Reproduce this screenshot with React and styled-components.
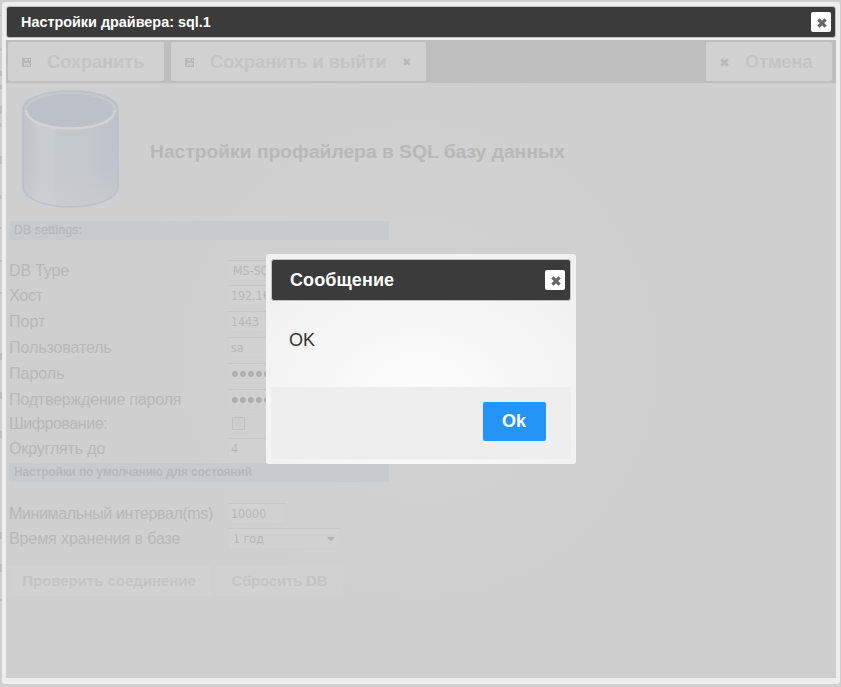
import React from 'react';
import styled, { createGlobalStyle } from 'styled-components';

const Global = createGlobalStyle`
  * { box-sizing: border-box; }
  html, body { margin: 0; padding: 0; }
  body {
    width: 841px; height: 687px; overflow: hidden; background: #d0d0d0;
    font-family: "Liberation Sans", Arial, sans-serif;
  }
  button { font-family: inherit; }
`;

const Page = styled.div`
  width: 841px;
  height: 687px;
  padding: 2px 1px 3px 0;
  display: flex;
  background: #cfcfcf;
`;

const PageEdge = styled.div`
  width: 2px;
  flex: none;
  display: flex;
  flex-direction: column;
`;

const EdgeMark = styled.i`
  height: ${p => p.$h || 2}px;
  margin-top: ${p => p.$gap}px;
  background: ${p => p.$c || '#b9b9b9'};
`;

const Window = styled.section`
  flex: 1;
  display: flex;
  flex-direction: column;
  padding: 4px 4px 6px;
  border-radius: 3px;
  background: #eeeeee;
`;

const TitleBar = styled.header`
  height: ${p => p.$h}px;
  flex: none;
  display: flex;
  align-items: center;
  justify-content: space-between;
  padding: ${p => p.$pad};
  border: 1px solid #c2c2c2;
  border-radius: 3px;
  background: #3b3b3b;
  color: #fff;
  font-weight: bold;
  font-size: ${p => p.$size}px;
  letter-spacing: ${p => p.$track || 0}px;
`;

const CloseButton = styled.button`
  width: 20px;
  height: 20px;
  padding: 1px 0 0 1px;
  display: flex;
  align-items: center;
  justify-content: center;
  border: 0;
  border-radius: 2px;
  background: #fff;
  color: #666;
`;

const Content = styled.main`
  flex: 1;
  margin-top: 2px;
  background: radial-gradient(circle 300px at 414px 320px, #d1d1d1 0%, #d0d0d0 70%, #cfcfcf 100%);
  color: #b5b5b5;
`;

const Toolbar = styled.nav`
  height: 43px;
  display: flex;
  align-items: center;
  padding: 0 4px 0 2px;
  gap: 7px;
  background: #bebebe;
`;

const ToolButton = styled.button`
  width: ${p => p.$w}px;
  height: 39px;
  display: flex;
  align-items: center;
  padding: 1px 0 0 14px;
  margin-left: ${p => (p.$end ? 'auto' : '0')};
  border: 0;
  border-radius: 2px;
  background: #d1d1d1;
  color: #c4c4c4;
  font-size: 18.2px;
  font-weight: bold;
  white-space: nowrap;

  span { margin: 0 16px 0 16px; }
  svg { color: #b9b9b9; }
`;

const Intro = styled.div`
  height: 138px;
  display: flex;
  align-items: flex-start;
  padding: 5px 0 0 14px;
`;

const Heading = styled.h1`
  margin: 52px 0 0 29px;
  font-size: 19.26px;
  line-height: 24px;
  color: #b8b8b8;
`;

const SectionTitle = styled.h2`
  width: 380px;
  height: 19px;
  margin: 0 0 0 3px;
  padding-left: 5px;
  font-size: 12px;
  line-height: 19px;
  font-weight: ${p => (p.$light ? 'normal' : 'bold')};
  letter-spacing: ${p => (p.$light ? 0.3 : -0.17)}px;
  -webkit-text-stroke: ${p => (p.$light ? '0.3px #b5b9bb' : '0')};
  color: #b5b9bb;
  background: #c8cbce;
`;

const Rows = styled.div`
  padding: ${p => p.$top}px 0 0 3px;
`;

const Row = styled.div`
  height: ${p => p.$h}px;
  display: grid;
  grid-template-columns: 218px auto;
  align-items: start;
`;

const Label = styled.label`
  font-size: 16px;
  line-height: 25px;
  letter-spacing: ${p => p.$track || 0}px;
  color: #b8b8b8;
  white-space: nowrap;
`;

const Field = styled.div`
  width: ${p => p.$w || 150}px;
  height: 21px;
  margin: 2px 0 0 1px;
  display: flex;
  align-items: center;
  justify-content: space-between;
  padding: 0 4px 0 ${p => (p.$select ? 4 : 2)}px;
  border: 1px solid #cecece;
  border-top-color: #c7c7c7;
  background: #d1d1d1;
  color: #b7b7b7;
  font-family: "DejaVu Sans Condensed", "DejaVu Sans", sans-serif;
  font-size: 12.3px;
  white-space: nowrap;
`;

const Dots = styled.span`
  display: flex;
  gap: 2px;
  padding-left: 1px;

  i { width: 6px; height: 6px; border-radius: 50%; background: #b0b0b0; }
`;

const Check = styled.span`
  width: 13px;
  height: 13px;
  margin: 6px 0 0 5px;
  border: 1px solid #c0c0c0;
  background: #cdcdcd;
`;

const Actions = styled.div`
  display: flex;
  gap: 5px;
  padding: 15px 0 0 3px;
`;

const ActionButton = styled.button`
  width: ${p => p.$w}px;
  height: 30px;
  padding: 0 ${p => p.$shift || 0}px 2px 0;
  border: 0;
  border-radius: 2px;
  background: #d1d1d1;
  color: #c4c4c4;
  font-size: 15px;
  font-weight: bold;
  letter-spacing: ${p => p.$track}px;
`;

const Dialog = styled.section`
  position: absolute;
  left: 266px;
  top: 254px;
  width: 310px;
  height: 210px;
  padding: 5px;
  display: flex;
  flex-direction: column;
  border-radius: 3px;
  background: radial-gradient(ellipse 190px 140px at 155px 140px, #fcfcfc 0%, #f9f9f9 35%, #f1f1f1 100%);
  color: #333;
`;

const Message = styled.p`
  flex: 1;
  margin: 0;
  padding: 28px 18px 0;
  font-size: 18px;
  line-height: 22px;
`;

const Footer = styled.footer`
  height: 72px;
  display: flex;
  justify-content: flex-end;
  padding: 15px 25px 0 0;
  background: #eeeeee;
`;

const OkButton = styled.button`
  width: 63px;
  height: 39px;
  padding: 0 1px 0 0;
  border: 0;
  border-radius: 2px;
  background: #2494f7;
  color: #fff;
  font-size: 18px;
  font-weight: bold;
`;

const Cross = ({ size = 10 }) => (
  <svg width={size} height={size} viewBox="0 0 10 10">
    <path d="M1.4 1.4L8.6 8.6M8.6 1.4L1.4 8.6" fill="none" stroke="currentColor" strokeWidth="3.2" />
  </svg>
);

const Floppy = () => (
  <svg width="9" height="9" viewBox="0 0 9 9">
    <path fillRule="evenodd" fill="#b7b7b7" d="M1 0H9V9H1L0 8V1ZM3 1V3H8V1ZM2 5V8H7.500V5ZM5.500 1H7V3H5.500Z" />
    <path d="M3 6H6.500V8H3Z" fill="#c3c3c3" />
  </svg>
);

const Arrow = () => (
  <svg width="8" height="4" viewBox="0 0 8 4">
    <path d="M0 0H8L4 4Z" fill="#aeaeae" />
  </svg>
);

const Database = () => (
  <svg width="101" height="122" viewBox="0 0 101 122">
    <defs>
      <linearGradient id="side" x1="0" x2="1" y1="0" y2="0">
        <stop offset="0" stopColor="#bfc4c9" />
        <stop offset=".13" stopColor="#c5c9cd" />
        <stop offset=".17" stopColor="#cacdd0" />
        <stop offset=".32" stopColor="#c8ccd0" />
        <stop offset=".36" stopColor="#c4c9cd" />
        <stop offset=".7" stopColor="#c2c7cc" />
        <stop offset="1" stopColor="#bcc2c9" />
      </linearGradient>
      <linearGradient id="glow" x1="0" x2="0" y1="0" y2="1">
        <stop offset="0" stopColor="#ced1d3" stopOpacity="0" />
        <stop offset=".6" stopColor="#cbced1" stopOpacity=".1" />
        <stop offset="1" stopColor="#ced1d3" stopOpacity=".5" />
      </linearGradient>
      <radialGradient id="ground">
        <stop offset=".7" stopColor="#c9cacb" />
        <stop offset="1" stopColor="#cfcfcf" stopOpacity="0" />
      </radialGradient>
    </defs>
    <ellipse cx="50.500" cy="101" rx="54" ry="22" fill="url(#ground)" />
    <path d="M3 22C3 10 24 3 50.500 3S98 10 98 22V99C98 110 77 119 50.500 119S3 110 3 99Z" fill="url(#side)" stroke="#bbc1ca" strokeWidth="1.600" />
    <path d="M4 23C10 47 91 47 97 23V99C97 110 77 118 50.500 118S4 110 4 99Z" fill="url(#glow)" />
    <ellipse cx="50.500" cy="22.500" rx="44" ry="17.500" fill="#bcc1c9" />
    <path d="M6 24C4 13 25 5 50.500 5S97 13 95 24" fill="none" stroke="#c5c9ce" strokeWidth="2" />
    <path d="M6 22C6 33 26 40.500 50.500 40.500S95 33 95 22" fill="none" stroke="#d1d3d5" strokeWidth="2.600" />
  </svg>
);

const Password = () => (
  <Dots>{Array.from({ length: 8 }, (_, i) => <i key={i} />)}</Dots>
);

const edge = [[13, 1], [32, 3], [20, 5], [9, 4], [17, 8], [9, 4], [29, 8], [31, 4], [28, 2], [31, 2], [30, 2], [59, 7], [32, 7], [32, 7], [94, 7], [25, 8], [27, 2]];

export default function App() {
  return (
    <>
      <Global />
      <Page>
        <PageEdge>
          {edge.map(([gap, h], i) => <EdgeMark key={i} $gap={gap} $h={h} $c={h > 4 ? '#bcbcbc' : '#c0c0c0'} />)}
        </PageEdge>
        <Window>
          <TitleBar $h={32} $pad="0 4px 0 14px" $size={14.4}>
            Настройки драйвера: sql.1
            <CloseButton aria-label="Закрыть"><Cross /></CloseButton>
          </TitleBar>
          <Content>
            <Toolbar>
              <ToolButton $w={156}><Floppy /><span>Сохранить</span></ToolButton>
              <ToolButton $w={255}><Floppy /><span>Сохранить и выйти</span><Cross size={8} /></ToolButton>
              <ToolButton $w={126} $end><Cross size={9} /><span>Отмена</span></ToolButton>
            </Toolbar>
            <Intro>
              <Database />
              <Heading>Настройки профайлера в SQL базу данных</Heading>
            </Intro>
            <SectionTitle $light>DB settings:</SectionTitle>
            <Rows $top={18}>
              <Row $h={25}><Label $track={-0.15}>DB Type</Label><Field $select>MS-SQL<Arrow /></Field></Row>
              <Row $h={26}><Label $track={-0.2}>Хост</Label><Field>192.168.1.10</Field></Row>
              <Row $h={26}><Label>Порт</Label><Field>1443</Field></Row>
              <Row $h={26}><Label $track={-0.08}>Пользователь</Label><Field>sa</Field></Row>
              <Row $h={26}><Label>Пароль</Label><Field><Password /></Field></Row>
              <Row $h={24}><Label $track={-0.18}>Подтверждение пароля</Label><Field><Password /></Field></Row>
              <Row $h={25}><Label $track={-0.43}>Шифрование:</Label><Check /></Row>
              <Row $h={27}><Label $track={-0.15}>Округлять до</Label><Field>4</Field></Row>
            </Rows>
            <SectionTitle>Настройки по умолчанию для состояний</SectionTitle>
            <Rows $top={19}>
              <Row $h={25}><Label $track={-0.36}>Минимальный интервал(ms)</Label><Field $w={59}>10000</Field></Row>
              <Row $h={25}><Label $track={-0.1}>Время хранения в базе</Label><Field $w={112} $select>1 год<Arrow /></Field></Row>
            </Rows>
            <Actions>
              <ActionButton $w={202} $track={-0.03} $shift={2}>Проверить соединение</ActionButton>
              <ActionButton $w={127} $track={-0.2}>Сбросить DB</ActionButton>
            </Actions>
          </Content>
        </Window>
      </Page>
      <Dialog role="dialog">
        <TitleBar $h={42} $pad="0 5px 0 18px" $size={18} $track={0.1}>
          Сообщение
          <CloseButton aria-label="Закрыть"><Cross /></CloseButton>
        </TitleBar>
        <Message>OK</Message>
        <Footer><OkButton>Ok</OkButton></Footer>
      </Dialog>
    </>
  );
}
